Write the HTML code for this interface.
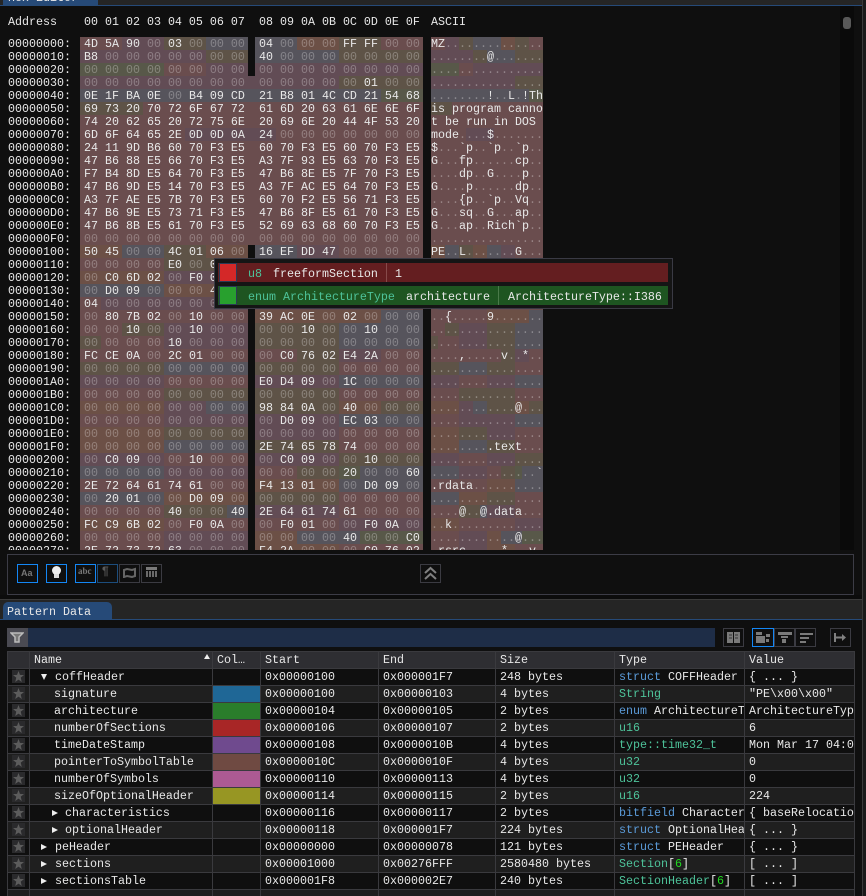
<!DOCTYPE html>
<html><head><meta charset="utf-8"><title>ImHex</title>
<style>
html,body{margin:0;padding:0;background:#0f0f0f}
#w{position:relative;width:866px;height:896px;overflow:hidden;background:#0f0f0f;font:11.67px/13px "Liberation Mono",monospace;color:#e8e8e8}
#w div,#w pre,#w svg{position:absolute;margin:0}
pre{font:11.67px/13px "Liberation Mono",monospace;color:#e8e8e8}
i{font-style:normal;color:rgba(255,255,255,.28)}
pre.as i{color:rgba(255,255,255,.3)}
.bt{box-sizing:border-box;border:1px solid #3b3b42;height:19px;width:21px}
.on{border-color:#1487f5}
.dk{border-color:#1c4d7d}
.r{left:7px;width:848px;height:17px;line-height:17px;white-space:pre}
.d{background:#0f0f0f}.l{background:#1f1f1f}.h{background:#2e2e32}
.r span{position:absolute;top:1px;height:16px;overflow:hidden;white-space:pre}
.n{left:27px;width:178px}.s{left:258px;width:116px}.e{left:376px;width:116px}.z{left:493px;width:118px}.t{left:612px;width:125px}.v{left:742px;width:105px}
.kw{color:#5b9bd9}.ty{color:#4ec39a}.nm{color:#22d822}
.st{left:5px;top:2px;width:13px;height:13px;background:#2a2a2c}
.st::after{content:"";position:absolute;left:1px;top:1px;width:11px;height:11px;background:#5c5c5c;clip-path:polygon(50% 0,63% 35%,100% 38%,70% 60%,80% 100%,50% 78%,20% 100%,30% 60%,0 38%,37% 35%)}
.sw{left:206px;top:1px;width:47px;height:16px}
.ad{left:0;width:6px;height:6px;background:#eee;top:6px;clip-path:polygon(0 0,100% 50%,0 100%)}
.dn{clip-path:polygon(0 0,100% 0,50% 100%)}
.cl{top:651px;width:1px;height:245px;background:#3a3a3e}
.hl{left:7px;width:848px;height:1px;background:#3a3a3e}
</style></head><body><div id="w">

<div style="left:0;top:0;width:866px;height:5px;background:#252525"></div>
<div style="left:3px;top:0;width:95px;height:5px;background:#264a78"></div>
<div style="left:8px;top:-8px;line-height:13px;white-space:pre">Hex Editor</div>
<div style="left:0;top:5px;width:866px;height:1px;background:#264a78"></div>
<div style="left:840px;top:6px;width:14px;height:544px;background:#0a0a0a"></div>
<div style="left:843px;top:17px;width:8px;height:12px;background:#585858;border-radius:3px"></div>
<div style="left:862px;top:0;width:1px;height:896px;background:#3a3a3a"></div>
<div style="left:863px;top:0;width:3px;height:896px;background:#1a1a1a"></div>

<pre style="left:8px;top:16px">Address</pre>
<pre style="left:84px;top:16px">00 01 02 03 04 05 06 07</pre>
<pre style="left:259px;top:16px">08 09 0A 0B 0C 0D 0E 0F</pre>
<pre style="left:431px;top:16px">ASCII</pre>

<svg width="866" height="550" style="left:0;top:0" shape-rendering="crispEdges">
<defs>
<clipPath id="cl"><rect x="80" y="37" width="168" height="513"/></clipPath>
<clipPath id="cr"><rect x="255" y="37" width="168" height="513"/></clipPath>
<g id="b">
<path fill="#6a4d4e" d="M0 0h16v40h-16z"/>
<path fill="#624c55" d="M2 0h2v1h-2zM0 1h6v1h-6zM6 2h2v1h-2zM8 2h8v1h-8zM0 3h12v1h-12zM5 7h4v1h-4zM2 16h2v1h-2zM10 16h2v1h-2zM4 18h4v1h-4zM1 20h7v1h-7zM4 22h4v1h-4zM4 23h4v1h-4zM12 24h2v1h-2zM0 26h4v1h-4zM8 26h4v1h-4zM4 28h2v1h-2zM4 29h4v1h-4zM8 29h4v1h-4zM8 30h4v1h-4zM0 32h4v1h-4zM8 32h4v1h-4zM4 33h4v1h-4zM8 36h4v1h-4zM12 37h4v1h-4zM4 38h4v1h-4zM4 39h4v1h-4z"/>
<path fill="#5e5347" d="M4 0h2v1h-2zM12 0h2v1h-2zM6 1h2v1h-2zM12 1h4v1h-4zM12 3h4v1h-4zM0 5h3v1h-3zM4 16h2v1h-2zM4 17h4v1h-4zM2 22h2v1h-2zM8 22h4v1h-4zM0 23h1v1h-1zM8 23h4v1h-4zM10 24h2v1h-2zM0 25h4v1h-4zM8 25h4v1h-4zM4 27h4v1h-4zM8 27h4v1h-4zM8 28h4v1h-4zM14 28h2v1h-2zM4 30h4v1h-4zM8 31h4v1h-4zM12 32h4v1h-4zM10 33h2v1h-2zM8 35h4v1h-4zM4 36h3v1h-3z"/>
<path fill="#56545c" d="M6 0h2v1h-2zM8 0h2v1h-2zM8 1h4v1h-4zM0 4h14v1h-14zM2 16h2v1h-2zM8 16h2v1h-2zM0 19h4v1h-4zM14 21h2v1h-2zM12 22h4v1h-4zM12 23h4v1h-4zM4 25h4v1h-4zM12 26h4v1h-4zM6 28h2v1h-2zM12 29h4v1h-4zM4 31h4v1h-4zM0 33h4v1h-4zM13 33h3v1h-3zM12 34h4v1h-4zM0 35h4v1h-4zM7 36h1v1h-1zM10 38h2v1h-2zM12 38h1v1h-1z"/>
<path fill="#6c5046" d="M10 0h2v1h-2zM0 16h2v1h-2zM6 16h2v1h-2zM0 18h4v1h-4zM4 19h4v1h-4zM8 21h6v1h-6zM0 28h4v1h-4zM12 28h2v1h-2zM0 30h4v1h-4zM0 31h4v1h-4zM8 34h4v1h-4zM4 35h4v1h-4zM0 37h4v1h-4zM8 38h2v1h-2zM8 39h4v1h-4z"/>
<path fill="#585849" d="M0 2h4v1h-4zM14 4h2v1h-2zM12 33h1v1h-1zM13 38h3v1h-3z"/>
</g>
</defs>
<g clip-path="url(#cl)"><use href="#b" transform="translate(80,37) scale(21,13)"/></g>
<g clip-path="url(#cr)"><use href="#b" transform="translate(87,37) scale(21,13)"/></g>
<rect x="248" y="76" width="7" height="169" fill="#6a4d4e"/>
<rect x="248" y="76" width="7" height="13" fill="#624c55"/>
<rect x="248" y="89" width="7" height="13" fill="#56545c"/>
<rect x="248" y="128" width="7" height="13" fill="#624c55"/>
<use href="#b" transform="translate(431,37) scale(7,13)"/>
<rect x="431" y="550" width="112" height="10" fill="#0f0f0f"/>
</svg>

<div style="left:0;top:37px;width:840px;height:513px;overflow:hidden">
<pre style="left:8px;top:1px">00000000:
00000010:
00000020:
00000030:
00000040:
00000050:
00000060:
00000070:
00000080:
00000090:
000000A0:
000000B0:
000000C0:
000000D0:
000000E0:
000000F0:
00000100:
00000110:
00000120:
00000130:
00000140:
00000150:
00000160:
00000170:
00000180:
00000190:
000001A0:
000001B0:
000001C0:
000001D0:
000001E0:
000001F0:
00000200:
00000210:
00000220:
00000230:
00000240:
00000250:
00000260:
00000270:</pre>
<pre style="left:84px;top:1px">4D 5A 90 <i>00</i> 03 <i>00 00 00</i>
B8 <i>00 00 00 00 00 00 00</i>
<i>00 00 00 00 00 00 00 00</i>
<i>00 00 00 00 00 00 00 00</i>
0E 1F BA 0E <i>00</i> B4 09 CD
69 73 20 70 72 6F 67 72
74 20 62 65 20 72 75 6E
6D 6F 64 65 2E 0D 0D 0A
24 11 9D B6 60 70 F3 E5
47 B6 88 E5 66 70 F3 E5
F7 B4 8D E5 64 70 F3 E5
47 B6 9D E5 14 70 F3 E5
A3 7F AE E5 7B 70 F3 E5
47 B6 9E E5 73 71 F3 E5
47 B6 8B E5 61 70 F3 E5
<i>00 00 00 00 00 00 00 00</i>
50 45 <i>00 00</i> 4C 01 06 <i>00</i>
<i>00 00 00 00</i> E0 <i>00</i> 02 01
<i>00</i> C0 6D 02 <i>00</i> F0 0A <i>00</i>
<i>00</i> D0 09 <i>00 00 00</i> 40 <i>00</i>
04 <i>00 00 00 00 00 00 00</i>
<i>00</i> 80 7B 02 <i>00</i> 10 <i>00 00</i>
<i>00 00</i> 10 <i>00 00</i> 10 <i>00 00</i>
<i>00 00 00 00</i> 10 <i>00 00 00</i>
FC CE 0A <i>00</i> 2C 01 <i>00 00</i>
<i>00 00 00 00 00 00 00 00</i>
<i>00 00 00 00 00 00 00 00</i>
<i>00 00 00 00 00 00 00 00</i>
<i>00 00 00 00 00 00 00 00</i>
<i>00 00 00 00 00 00 00 00</i>
<i>00 00 00 00 00 00 00 00</i>
<i>00 00 00 00 00 00 00 00</i>
<i>00</i> C0 09 <i>00 00</i> 10 <i>00 00</i>
<i>00 00 00 00 00 00 00 00</i>
2E 72 64 61 74 61 <i>00 00</i>
<i>00</i> 20 01 <i>00 00</i> D0 09 <i>00</i>
<i>00 00 00 00</i> 40 <i>00 00</i> 40
FC C9 6B 02 <i>00</i> F0 0A <i>00</i>
<i>00 00 00 00 00 00 00 00</i>
2E 72 73 72 63 <i>00 00 00</i></pre>
<pre style="left:259px;top:1px">04 <i>00 00 00</i> FF FF <i>00 00</i>
40 <i>00 00 00 00 00 00 00</i>
<i>00 00 00 00 00 00 00 00</i>
<i>00 00 00 00 00</i> 01 <i>00 00</i>
21 B8 01 4C CD 21 54 68
61 6D 20 63 61 6E 6E 6F
20 69 6E 20 44 4F 53 20
24 <i>00 00 00 00 00 00 00</i>
60 70 F3 E5 60 70 F3 E5
A3 7F 93 E5 63 70 F3 E5
47 B6 8E E5 7F 70 F3 E5
A3 7F AC E5 64 70 F3 E5
60 70 F2 E5 56 71 F3 E5
47 B6 8F E5 61 70 F3 E5
52 69 63 68 60 70 F3 E5
<i>00 00 00 00 00 00 00 00</i>
16 EF DD 47 <i>00 00 00 00</i>
<i>00 00 00 00 00 00 00 00</i>
<i>00 00 00 00 00 00 00 00</i>
<i>00 00 00 00 00 00 00 00</i>
<i>00 00 00 00 00 00 00 00</i>
39 AC 0E <i>00</i> 02 <i>00 00 00</i>
<i>00 00</i> 10 <i>00 00</i> 10 <i>00 00</i>
<i>00 00 00 00 00 00 00 00</i>
<i>00</i> C0 76 02 E4 2A <i>00 00</i>
<i>00 00 00 00 00 00 00 00</i>
E0 D4 09 <i>00</i> 1C <i>00 00 00</i>
<i>00 00 00 00 00 00 00 00</i>
98 84 0A <i>00</i> 40 <i>00 00 00</i>
<i>00</i> D0 09 <i>00</i> EC 03 <i>00 00</i>
<i>00 00 00 00 00 00 00 00</i>
2E 74 65 78 74 <i>00 00 00</i>
<i>00</i> C0 09 <i>00 00</i> 10 <i>00 00</i>
<i>00 00 00 00</i> 20 <i>00 00</i> 60
F4 13 01 <i>00 00</i> D0 09 <i>00</i>
<i>00 00 00 00 00 00 00 00</i>
2E 64 61 74 61 <i>00 00 00</i>
<i>00</i> F0 01 <i>00 00</i> F0 0A <i>00</i>
<i>00 00 00 00</i> 40 <i>00 00</i> C0
F4 2A <i>00 00 00</i> C0 76 02</pre>
<pre class="as" style="left:431px;top:1px">MZ<i>..............</i>
<i>........</i>@<i>.......</i>
<i>................</i>
<i>................</i>
<i>........</i>!<i>..</i>L<i>.</i>!Th
is program canno
t be run in DOS 
mode<i>....</i>$<i>.......</i>
$<i>...</i>`p<i>..</i>`p<i>..</i>`p<i>..</i>
G<i>...</i>fp<i>......</i>cp<i>..</i>
<i>....</i>dp<i>..</i>G<i>....</i>p<i>..</i>
G<i>....</i>p<i>......</i>dp<i>..</i>
<i>....</i>{p<i>..</i>`p<i>..</i>Vq<i>..</i>
G<i>...</i>sq<i>..</i>G<i>...</i>ap<i>..</i>
G<i>...</i>ap<i>..</i>Rich`p<i>..</i>
<i>................</i>
PE<i>..</i>L<i>.......</i>G<i>...</i>
<i>................</i>
<i>................</i>
<i>................</i>
<i>................</i>
<i>..</i>{<i>.....</i>9<i>.......</i>
<i>................</i>
<i>................</i>
<i>....</i>,<i>.....</i>v<i>..</i>*<i>..</i>
<i>................</i>
<i>................</i>
<i>................</i>
<i>............</i>@<i>...</i>
<i>................</i>
<i>................</i>
<i>........</i>.text<i>...</i>
<i>................</i>
<i>...............</i>`
.rdata<i>..........</i>
<i>................</i>
<i>....</i>@<i>..</i>@.data<i>...</i>
<i>..</i>k<i>.............</i>
<i>............</i>@<i>...</i>
.rsrc<i>.....</i>*<i>...</i>v<i>.</i></pre>
</div>

<!-- tooltip -->
<div style="left:214px;top:258px;width:459px;height:51px;box-sizing:border-box;background:#151515;border:1px solid #3a3a44"></div>
<div style="left:218px;top:263px;width:450px;height:19px;background:#641e20"></div>
<div style="left:218px;top:286px;width:450px;height:19px;background:#1e5521"></div>
<div style="left:219px;top:263px;width:18px;height:19px;box-sizing:border-box;background:#d42828;border:1px solid #2b3a55"></div>
<div style="left:219px;top:286px;width:18px;height:19px;box-sizing:border-box;background:#28a02e;border:1px solid #2b3a55"></div>
<div style="left:386px;top:263px;width:1px;height:19px;background:#874a4a"></div>
<div style="left:498px;top:286px;width:1px;height:19px;background:#4a7a4a"></div>
<pre style="left:248px;top:268px;color:#4ec39a">u8</pre>
<pre style="left:273px;top:268px">freeformSection</pre>
<pre style="left:395px;top:268px">1</pre>
<pre style="left:248px;top:291px;color:#4ec39a">enum ArchitectureType</pre>
<pre style="left:406px;top:291px">architecture</pre>
<pre style="left:508px;top:291px">ArchitectureType::I386</pre>

<!-- toolbar -->
<div style="left:7px;top:554px;width:847px;height:41px;box-sizing:border-box;border:1px solid #3c3c46"></div>
<div class="bt on" style="left:17px;top:564px"></div>
<pre style="left:21px;top:567px;color:#777;font:bold 9px/13px 'Liberation Sans',sans-serif">Aa</pre>
<div class="bt on" style="left:46px;top:564px"></div>
<div style="left:52px;top:566px;width:9px;height:9px;border-radius:50%;background:#eee"></div>
<div style="left:54px;top:574px;width:5px;height:4px;background:#ddd"></div>
<div class="bt on" style="left:75px;top:564px"></div>
<pre style="left:78px;top:565px;color:#777;font:bold 9px/13px 'Liberation Serif',serif">abc</pre>
<div class="bt dk" style="left:97px;top:564px"></div>
<pre style="left:102px;top:565px;color:#5a5a5a;font:bold 12px/13px 'Liberation Sans',sans-serif">¶</pre>
<div class="bt" style="left:119px;top:564px"></div>
<svg style="left:123px;top:567px" width="13" height="11" viewBox="0 0 13 11"><path d="M1 3l3-1 5 1 3-1v7l-3 1-5-1-3 1z" fill="none" stroke="#666" stroke-width="2"/></svg>
<div class="bt" style="left:141px;top:564px"></div>
<svg style="left:145px;top:567px" width="13" height="11" viewBox="0 0 13 11"><path d="M1 0h11v3h-11z" fill="#7a7a7a"/><path d="M1 4h2v6h-2zM4 4h2v6h-2zM7 4h2v6h-2zM10 4h2v6h-2z" fill="#6a6a6a"/></svg>
<div class="bt" style="left:420px;top:564px"></div>
<svg style="left:423px;top:566px" width="15" height="15" viewBox="0 0 15 15"><path d="M2 7l5.500-5 5.500 5M2 13l5.500-5 5.500 5" fill="none" stroke="#808080" stroke-width="2"/></svg>

<!-- pattern data panel -->
<div style="left:0;top:595px;width:862px;height:4px;background:#0c0c0c"></div>
<div style="left:0;top:599px;width:862px;height:1px;background:#3a3a3a"></div>
<div style="left:0;top:600px;width:862px;height:19px;background:#252525"></div>
<div style="left:3px;top:602px;width:109px;height:17px;background:#264a78;border-radius:5px 5px 0 0"></div>
<pre style="left:7px;top:606px">Pattern Data</pre>
<div style="left:0;top:619px;width:862px;height:1px;background:#264a78"></div>

<div style="left:7px;top:628px;width:21px;height:19px;background:#4a4a52"></div>
<svg style="left:10px;top:632px" width="14" height="11" viewBox="0 0 14 11"><path d="M1 1h12l-4 4v5h-4v-5z" fill="#777" stroke="#bbb" stroke-width="1.500"/></svg>
<div style="left:28px;top:628px;width:687px;height:19px;background:#1e2d47"></div>

<div class="bt" style="left:723px;top:628px"></div>
<svg style="left:727px;top:632px" width="13" height="11" viewBox="0 0 13 11"><path d="M0 0h6v11h-6zM7 0h6v11h-6z" fill="#7a7a7a"/><path d="M2 3h3M2 6h3M8 3h3M8 6h3" stroke="#333"/></svg>
<div class="bt on" style="left:752px;top:628px;width:22px"></div>
<svg style="left:756px;top:632px" width="14" height="11" viewBox="0 0 14 11"><path d="M0 0h6v3h-6zM0 4h9v7h-9zM10 2h4v3h-4zM10 7h3v3h-3z" fill="#7a7a7a"/></svg>
<div class="bt" style="left:774px;top:628px"></div>
<svg style="left:778px;top:632px" width="14" height="11" viewBox="0 0 14 11"><path d="M0 0h14v3h-14zM3 4h7v2h-7zM4 7h4v4h-4z" fill="#7a7a7a"/></svg>
<div class="bt" style="left:795px;top:628px"></div>
<svg style="left:799px;top:632px" width="14" height="11" viewBox="0 0 14 11"><path d="M1 1h13v2h-13zM1 5h9v2h-9zM1 9h6v2h-6z" fill="#7a7a7a"/></svg>
<div class="bt" style="left:830px;top:628px"></div>
<svg style="left:834px;top:632px" width="13" height="11" viewBox="0 0 13 11"><path d="M1 1v9" stroke="#808080" stroke-width="2"/><path d="M2 5.500h7" stroke="#808080" stroke-width="2"/><path d="M8 2l4 3.500-4 3.500z" fill="#808080"/></svg>

<!-- table -->
<div class="r h" style="top:651px;height:17px">
<span style="left:27px">Name</span><span style="left:210px">Col…</span><span class="s">Start</span><span class="e">End</span><span class="z">Size</span><span class="t">Type</span><span class="v">Value</span>
<div style="left:197px;top:3px;width:6px;height:5px;background:#eee;clip-path:polygon(50% 0,100% 100%,0 100%)"></div>
</div>

<div class="r d" style="top:668px"><div class="st"></div><div class="ad dn" style="left:34px"></div><span class="n" style="left:48px">coffHeader</span><span class="s">0x00000100</span><span class="e">0x000001F7</span><span class="z">248 bytes</span><span class="t"><b class="kw" style="font-weight:400">struct</b> COFFHeader</span><span class="v">{ ... }</span></div>
<div class="r l" style="top:685px"><div class="st"></div><span class="n" style="left:47px">signature</span><div class="sw" style="background:#1f6796"></div><span class="s">0x00000100</span><span class="e">0x00000103</span><span class="z">4 bytes</span><span class="t ty">String</span><span class="v">"PE\x00\x00"</span></div>
<div class="r d" style="top:702px"><div class="st"></div><span class="n" style="left:47px">architecture</span><div class="sw" style="background:#2a7d2b"></div><span class="s">0x00000104</span><span class="e">0x00000105</span><span class="z">2 bytes</span><span class="t"><b class="kw" style="font-weight:400">enum</b> ArchitectureType</span><span class="v">ArchitectureType::I386</span></div>
<div class="r l" style="top:719px"><div class="st"></div><span class="n" style="left:47px">numberOfSections</span><div class="sw" style="background:#a82626"></div><span class="s">0x00000106</span><span class="e">0x00000107</span><span class="z">2 bytes</span><span class="t ty">u16</span><span class="v">6</span></div>
<div class="r d" style="top:736px"><div class="st"></div><span class="n" style="left:47px">timeDateStamp</span><div class="sw" style="background:#6f4a8e"></div><span class="s">0x00000108</span><span class="e">0x0000010B</span><span class="z">4 bytes</span><span class="t ty">type::time32_t</span><span class="v">Mon Mar 17 04:00:22 2008</span></div>
<div class="r l" style="top:753px"><div class="st"></div><span class="n" style="left:47px">pointerToSymbolTable</span><div class="sw" style="background:#6f4a42"></div><span class="s">0x0000010C</span><span class="e">0x0000010F</span><span class="z">4 bytes</span><span class="t ty">u32</span><span class="v">0</span></div>
<div class="r d" style="top:770px"><div class="st"></div><span class="n" style="left:47px">numberOfSymbols</span><div class="sw" style="background:#ac5a93"></div><span class="s">0x00000110</span><span class="e">0x00000113</span><span class="z">4 bytes</span><span class="t ty">u32</span><span class="v">0</span></div>
<div class="r l" style="top:787px"><div class="st"></div><span class="n" style="left:47px">sizeOfOptionalHeader</span><div class="sw" style="background:#979623"></div><span class="s">0x00000114</span><span class="e">0x00000115</span><span class="z">2 bytes</span><span class="t ty">u16</span><span class="v">224</span></div>
<div class="r d" style="top:804px"><div class="st"></div><div class="ad" style="left:45px"></div><span class="n" style="left:58px">characteristics</span><span class="s">0x00000116</span><span class="e">0x00000117</span><span class="z">2 bytes</span><span class="t"><b class="kw" style="font-weight:400">bitfield</b> Characteristics</span><span class="v">{ baseRelocationsStripped }</span></div>
<div class="r l" style="top:821px"><div class="st"></div><div class="ad" style="left:45px"></div><span class="n" style="left:58px">optionalHeader</span><span class="s">0x00000118</span><span class="e">0x000001F7</span><span class="z">224 bytes</span><span class="t"><b class="kw" style="font-weight:400">struct</b> OptionalHeader</span><span class="v">{ ... }</span></div>
<div class="r d" style="top:838px"><div class="st"></div><div class="ad" style="left:34px"></div><span class="n" style="left:48px">peHeader</span><span class="s">0x00000000</span><span class="e">0x00000078</span><span class="z">121 bytes</span><span class="t"><b class="kw" style="font-weight:400">struct</b> PEHeader</span><span class="v">{ ... }</span></div>
<div class="r l" style="top:855px"><div class="st"></div><div class="ad" style="left:34px"></div><span class="n" style="left:48px">sections</span><span class="s">0x00001000</span><span class="e">0x00276FFF</span><span class="z">2580480 bytes</span><span class="t"><b class="ty" style="font-weight:400">Section</b>[<b class="nm" style="font-weight:400">6</b>]</span><span class="v">[ ... ]</span></div>
<div class="r d" style="top:872px"><div class="st"></div><div class="ad" style="left:34px"></div><span class="n" style="left:48px">sectionsTable</span><span class="s">0x000001F8</span><span class="e">0x000002E7</span><span class="z">240 bytes</span><span class="t"><b class="ty" style="font-weight:400">SectionHeader</b>[<b class="nm" style="font-weight:400">6</b>]</span><span class="v">[ ... ]</span></div>
<div class="r l" style="top:889px;height:7px"></div>

<div class="cl" style="left:7px"></div><div class="cl" style="left:29px"></div><div class="cl" style="left:212px"></div><div class="cl" style="left:260px"></div><div class="cl" style="left:378px"></div><div class="cl" style="left:495px"></div><div class="cl" style="left:614px"></div><div class="cl" style="left:744px"></div><div class="cl" style="left:854px"></div>
<div class="hl" style="top:651px"></div><div class="hl" style="top:668px"></div><div class="hl" style="top:685px"></div><div class="hl" style="top:702px"></div><div class="hl" style="top:719px"></div><div class="hl" style="top:736px"></div><div class="hl" style="top:753px"></div><div class="hl" style="top:770px"></div><div class="hl" style="top:787px"></div><div class="hl" style="top:804px"></div><div class="hl" style="top:821px"></div><div class="hl" style="top:838px"></div><div class="hl" style="top:855px"></div><div class="hl" style="top:872px"></div><div class="hl" style="top:889px"></div>
</div></body></html>
